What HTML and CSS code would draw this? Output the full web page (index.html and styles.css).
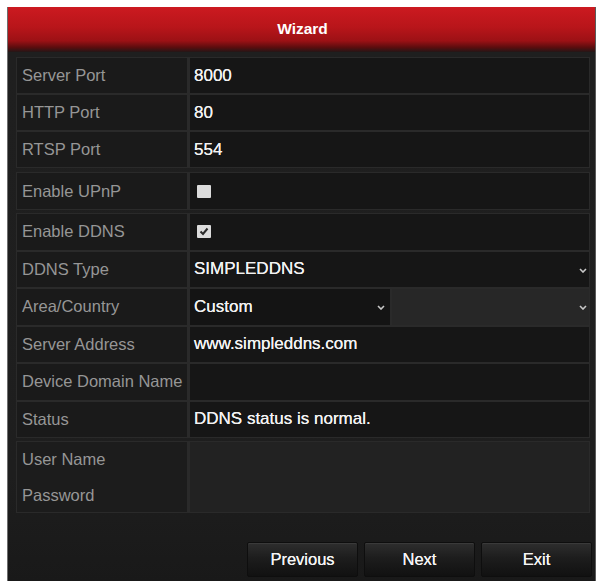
FILE: index.html
```html
<!DOCTYPE html>
<html>
<head>
<meta charset="utf-8">
<link rel="stylesheet" href="styles.css">
</head>
<body>
<div class="panel">
  <div class="header">Wizard</div>
  <div class="content">
    <div class="group g1">
      <div class="row"><div class="label">Server Port</div><div class="value">8000</div></div>
      <div class="row"><div class="label">HTTP Port</div><div class="value">80</div></div>
      <div class="row"><div class="label">RTSP Port</div><div class="value">554</div></div>
    </div>
    <div class="group g2">
      <div class="row"><div class="label">Enable UPnP</div><div class="value"><span class="check"></span></div></div>
    </div>
    <div class="group g3">
      <div class="row"><div class="label">Enable DDNS</div><div class="value"><span class="check"><svg width="14" height="13" viewBox="0 0 14 13"><path d="M3.5 6.5 L6 9 L10.5 3.5" fill="none" stroke="#2a2a2a" stroke-width="2"/></svg></span></div></div>
      <div class="row"><div class="label">DDNS Type</div><div class="value select"><span>SIMPLEDDNS</span><svg class="chev" width="8" height="5" viewBox="0 0 8 5"><path d="M1 1 L4 4 L7 1" fill="none" stroke="#c8c8c8" stroke-width="1.6"/></svg></div></div>
      <div class="row"><div class="label">Area/Country</div><div class="split"><div class="value select sel-a"><span>Custom</span><svg class="chev" width="8" height="5" viewBox="0 0 8 5"><path d="M1 1 L4 4 L7 1" fill="none" stroke="#c8c8c8" stroke-width="1.6"/></svg></div><div class="value select sel-b"><span></span><svg class="chev" width="8" height="5" viewBox="0 0 8 5"><path d="M1 1 L4 4 L7 1" fill="none" stroke="#c8c8c8" stroke-width="1.6"/></svg></div></div></div>
      <div class="row"><div class="label">Server Address</div><div class="value">www.simpleddns.com</div></div>
      <div class="row"><div class="label">Device Domain Name</div><div class="value"></div></div>
      <div class="row"><div class="label">Status</div><div class="value">DDNS status is normal.</div></div>
    </div>
    <div class="group g4">
      <div class="row tall"><div class="label stack"><div>User Name</div><div>Password</div></div><div class="value blank"></div></div>
    </div>
    <div class="footer">
      <div class="btn">Previous</div>
      <div class="btn">Next</div>
      <div class="btn">Exit</div>
    </div>
  </div>
</div>
</body>
</html>
```
FILE: styles.css
```css
html, body {
  margin: 0;
  padding: 0;
  background: #ffffff;
}
body {
  font-family: "Liberation Sans", Arial, sans-serif;
}
.panel {
  margin: 7px 0 0 7px;
  width: 589px;
  height: 574px;
  box-sizing: border-box;
  border-left: 1px solid #6e6e6e;
  border-right: 1px solid #5a5a5a;
  background: #1e1e1e;
  display: flex;
  flex-direction: column;
}
.header {
  height: 45px;
  flex: none;
  background: linear-gradient(#cc1a20 0%, #b8151a 45%, #9c1115 75%, #5a0d0e 90%, #231717 100%);
  color: #ffffff;
  font-weight: bold;
  font-size: 15.5px;
  text-align: center;
  line-height: 43px;
  padding-left: 2px;
}
.content {
  flex: 1;
  display: flex;
  flex-direction: column;
  padding: 5px 5px 4px 8px;
  background: linear-gradient(#1f1f1f 0%, #1e1e1e 80%, #191919 100%);
}
.group {
  background: #2a2a2a;
  padding: 1px;
  display: flex;
  flex-direction: column;
  gap: 2px;
}
.g2 { margin-top: 4px; }
.g3 { margin-top: 3px; }
.g4 { margin-top: 3px; }
.row {
  display: flex;
  gap: 3px;
  height: 35px;
}
.g2 .row { height: 36px; }
.g3 .row { height: 35.5px; }
.row.tall { height: 70px; }
.label {
  width: 170px;
  flex: none;
  background: #1a1a1a;
  color: #969696;
  font-size: 16.5px;
  padding-left: 5px;
  box-sizing: border-box;
  display: flex;
  align-items: center;
  white-space: nowrap;
}
.label.stack {
  flex-direction: column;
  align-items: flex-start;
  justify-content: center;
  background: #1c1c1c;
}
.label.stack div {
  line-height: 36px;
}
.value {
  flex: 1;
  background: #161616;
  color: #f2f2f2;
  font-size: 17px;
  padding-left: 4px;
  box-sizing: border-box;
  display: flex;
  align-items: center;
  white-space: nowrap;
  text-shadow: 0 0 0.5px #ffffff;
}
.value.blank {
  background: #222222;
}
.select {
  justify-content: space-between;
  padding-right: 2px;
}
.split {
  flex: 1;
  display: flex;
  gap: 2px;
}
.sel-a {
  flex: none;
  width: 200px;
  background: #141414;
  padding-right: 5px;
}
.sel-b {
  background: #272727;
}
.chev {
  flex: none;
  margin-top: 2px;
}
.check {
  width: 14px;
  height: 13px;
  margin-left: 3px;
  background: #dcdcdc;
  border-radius: 1px;
  display: flex;
}
.footer {
  flex: 1;
  display: flex;
  justify-content: flex-end;
  align-items: flex-end;
  gap: 6px;
  margin-right: -2px;
}
.btn {
  width: 111px;
  height: 35px;
  box-sizing: border-box;
  border: 1px solid #0e0e0e;
  border-radius: 2px;
  background: linear-gradient(#2e2e2e 0%, #1d1d1d 45%, #111111 100%);
  color: #f4f4f4;
  font-size: 16.5px;
  display: flex;
  align-items: center;
  justify-content: center;
  box-shadow: inset 0 1px 0 #3a3a3a;
  text-shadow: 0 0 0.5px #ffffff;
}
```
